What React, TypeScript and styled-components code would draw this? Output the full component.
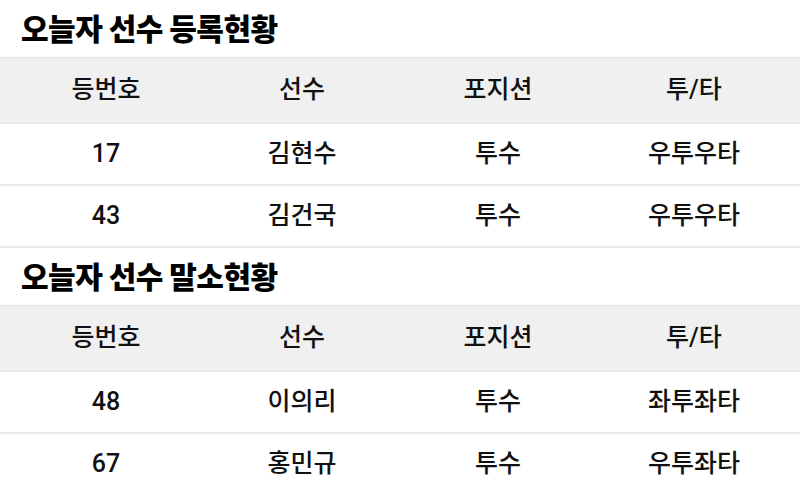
import styled, { createGlobalStyle } from "styled-components";

const GlobalStyle = createGlobalStyle`
  html, body {
    margin: 0;
    padding: 0;
    background: #ffffff;
    font-family: Roboto, "Noto Sans CJK KR", "Noto Sans", sans-serif;
    color: #111111;
  }
`;

const Page = styled.div`
  width: 800px;
  overflow: hidden;
`;

const Title = styled.h2`
  margin: 0;
  padding: 8px 0 0 21px;
  height: 49px;
  font-family: "Noto Sans CJK KR", sans-serif;
  font-size: 30px;
  font-weight: 900;
  line-height: 38px;
  letter-spacing: -0.5px;
  color: #000;
`;

const Table = styled.div`
  display: flex;
  flex-direction: column;
`;

const Row = styled.div<{ $head?: boolean }>`
  display: grid;
  grid-template-columns: repeat(4, 1fr);
  padding: 0 8px;
  height: ${(p) => (p.$head ? 64 : 60)}px;
  align-items: center;
  background: ${(p) => (p.$head ? "#f0f0f0" : "#ffffff")};
  border-top: ${(p) => (p.$head ? "1px solid #e4e4e4" : "none")};
  border-bottom: 2px solid #e9e9e9;
`;

const Cell = styled.div`
  text-align: center;
  font-size: 25px;
  font-weight: 500;
  line-height: 30px;
  color: #111;
`;

type Player = [string, string, string, string];

const heads: Player = ["등번호", "선수", "포지션", "투/타"];

const sections: { title: string; rows: Player[] }[] = [
  {
    title: "오늘자 선수 등록현황",
    rows: [
      ["17", "김현수", "투수", "우투우타"],
      ["43", "김건국", "투수", "우투우타"],
    ],
  },
  {
    title: "오늘자 선수 말소현황",
    rows: [
      ["48", "이의리", "투수", "좌투좌타"],
      ["67", "홍민규", "투수", "우투좌타"],
    ],
  },
];

export default function App() {
  return (
    <>
      <GlobalStyle />
      <Page>
        {sections.map((s) => (
          <section key={s.title}>
            <Title>{s.title}</Title>
            <Table>
              <Row $head>
                {heads.map((h) => (
                  <Cell key={h}>{h}</Cell>
                ))}
              </Row>
              {s.rows.map((r) => (
                <Row key={r[0]}>
                  {r.map((c, i) => (
                    <Cell key={i}>{c}</Cell>
                  ))}
                </Row>
              ))}
            </Table>
          </section>
        ))}
      </Page>
    </>
  );
}
